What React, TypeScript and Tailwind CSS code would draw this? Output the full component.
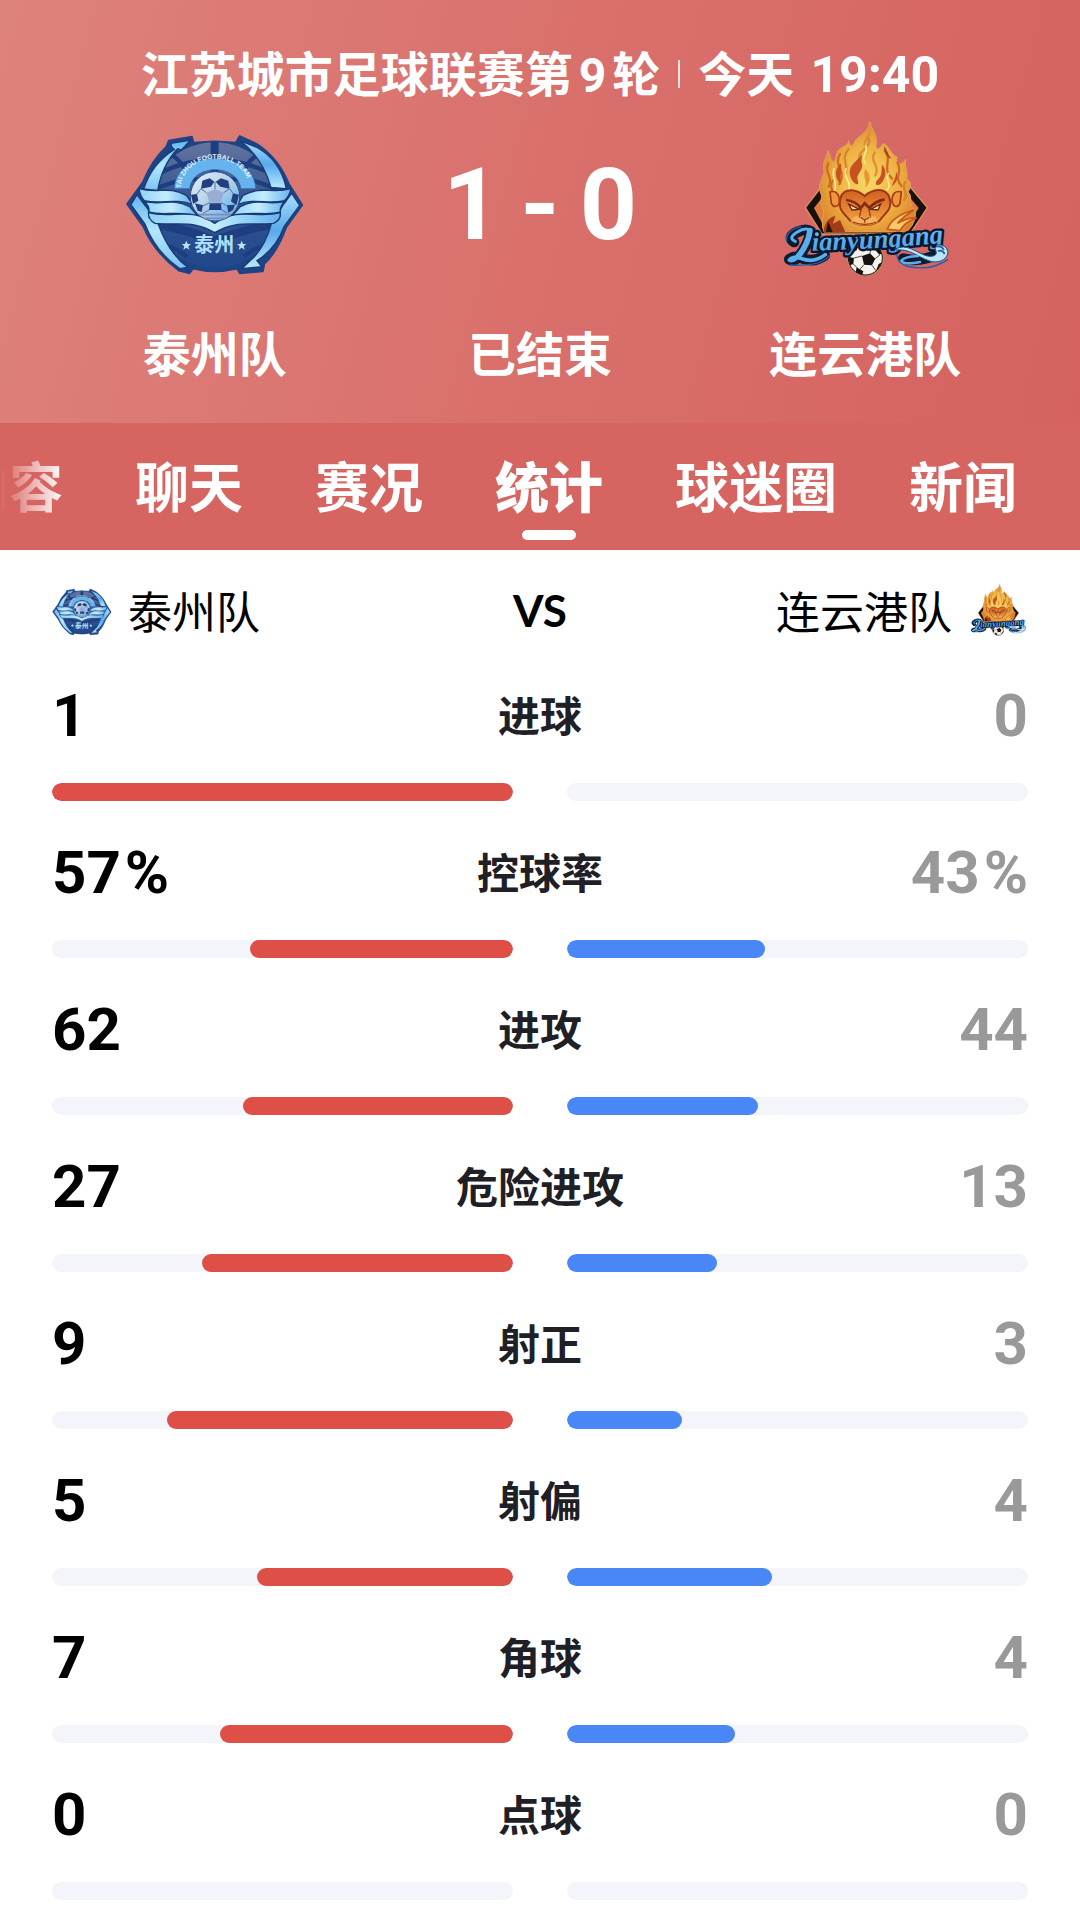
const CJK = "font-['Noto_Sans_CJK_SC',sans-serif]";
const NUM = "font-['Roboto','Noto_Sans_CJK_SC',sans-serif]";

type LogoProps = { id: string; className: string };

function TaizhouLogo({ id, className }: LogoProps) {
  const url = (name: string) => `url(#${id}-${name})`;
  return (
    <svg viewBox="74 15 540 540" className={className} role="img" aria-label="泰州队队徽">
      <defs>
        <linearGradient id={`${id}-disc`} x1="0" y1="0" x2="0" y2="1">
          <stop offset="0" stopColor="#64749f" />
          <stop offset="0.45" stopColor="#345591" />
          <stop offset="1" stopColor="#21488c" />
        </linearGradient>
        <linearGradient id={`${id}-left`} x1="0" y1="0" x2="0" y2="1">
          <stop offset="0" stopColor="#5fb4f0" />
          <stop offset="0.5" stopColor="#b5e6fb" />
          <stop offset="1" stopColor="#7cc4f4" />
        </linearGradient>
        <linearGradient id={`${id}-right`} x1="0" y1="0" x2="0" y2="1">
          <stop offset="0" stopColor="#a8defb" />
          <stop offset="0.5" stopColor="#5aa9ec" />
          <stop offset="1" stopColor="#b9ebfc" />
        </linearGradient>
        <linearGradient id={`${id}-wave`} x1="0" y1="0" x2="1" y2="0">
          <stop offset="0" stopColor="#8fd2f8" />
          <stop offset="0.5" stopColor="#c4edfc" />
          <stop offset="1" stopColor="#63b2ef" />
        </linearGradient>
        <linearGradient id={`${id}-ball`} x1="0" y1="0" x2="1" y2="1">
          <stop offset="0" stopColor="#e3f3fb" />
          <stop offset="0.5" stopColor="#b3cfe6" />
          <stop offset="0.75" stopColor="#7fbdf0" />
          <stop offset="1" stopColor="#8d97bd" />
        </linearGradient>
        <clipPath id={`${id}-clip`}>
          <ellipse cx="343" cy="285" rx="196" ry="190" />
        </clipPath>
        <path id={`${id}-arc`} d="M242 234 A102 88 0 0 1 446 234" />
      </defs>

      <path
        d="M275 80 L205 92 L198 110 Q155 150 128 215 L80 282 L130 352 Q160 425 235 482 L268 490 L278 476 Q343 492 410 476 L418 490 L488 484 L492 462 Q532 425 558 352 L606 285 L566 222 Q535 145 470 102 L418 78 L406 98 L343 94 L280 98 Z"
        fill="#1f4485"
        stroke="#1f4485"
        strokeWidth="5"
        strokeLinejoin="round"
      />
      <ellipse cx="343" cy="285" rx="194" ry="188" fill={url("disc")} />
      <g clipPath={url("clip")} fill="none" stroke="#1d3f80" strokeWidth="13">
        <path d="M150 205 Q240 150 342 150 Q445 150 538 205" />
        <path d="M150 245 Q250 190 345 215 Q440 190 538 245" />
        <path d="M150 340 Q240 352 343 392 Q450 352 540 340" strokeWidth="26" />
        <path d="M160 400 Q220 405 260 440 M530 400 Q470 405 430 440" />
        <path d="M343 90 V200" strokeWidth="24" />
        <path d="M195 125 Q235 140 255 180 M492 125 Q450 140 432 180" />
      </g>

      <path
        d="M222 236 C225 115 463 115 466 236 L422 236 C412 160 276 160 268 236 Z"
        fill="#67b3ee"
        stroke="#2a65ad"
        strokeWidth="2"
      />
      <text fontSize="20" fill="#e2f4fe" className="font-['Liberation_Sans',sans-serif]">
        <textPath href={`#${id}-arc`}>
          TAI ZHOU FOOTBALL TEAM
        </textPath>
      </text>

      <path
        d="M271 90 L212 100 Q212 112 222 118 Q155 160 130 237 L172 242 Q185 165 232 116 L243 120 Z"
        fill={url("left")}
        stroke="#183c78"
        strokeWidth="4"
      />
      <path
        d="M418 92 Q485 140 512 232 L558 236 Q540 150 470 112 Z"
        fill={url("right")}
        stroke="#183c78"
        strokeWidth="4"
      />
      <path
        d="M110 254 L92 284 L134 342 Q165 425 238 476 L262 472 Q205 430 172 338 L146 322 Q150 300 132 284 Z"
        fill={url("left")}
        stroke="#183c78"
        strokeWidth="4"
      />
      <path
        d="M574 250 L598 286 L552 348 Q528 415 470 452 L484 470 L424 476 L454 448 Q494 412 514 338 L540 318 Q535 300 552 280 Z"
        fill={url("right")}
        stroke="#183c78"
        strokeWidth="4"
      />

      <g fill={url("wave")} stroke="#173a72" strokeWidth="4" strokeLinejoin="round">
        <path d="M116 236 C175 252 205 226 258 256 L278 284 C220 262 185 285 132 272 Q120 260 116 236 Z" />
        <path d="M572 236 C510 252 485 226 428 256 L412 284 C465 262 500 285 552 272 Q568 258 572 236 Z" />
        <path d="M130 274 C185 288 215 262 268 290 L296 322 C232 298 195 320 146 306 Q148 286 130 274 Z" />
        <path d="M556 274 C500 288 470 262 420 290 L392 322 C455 298 490 320 540 306 Q538 286 556 274 Z" />
        <path d="M144 308 C220 328 265 288 343 340 C420 288 465 328 540 308 Q542 330 520 340 C455 348 410 328 343 368 C275 328 235 348 164 340 Q145 330 144 308 Z" />
      </g>

      <circle cx="344" cy="259" r="74" fill={url("ball")} stroke="#24528f" strokeWidth="3" />
      <g fill="#213f7c">
        <path d="M306 212 L328 205 L342 215 L332 230 L302 236 Z" />
        <path d="M384 212 L362 205 L346 215 L360 230 L388 236 Z" />
        <path d="M318 248 L344 238 L370 248 L362 278 L328 278 Z" fill="#98aed2" />
        <path d="M272 254 L290 252 L294 272 L278 282 Z" />
        <path d="M416 254 L398 250 L392 274 L408 286 Z" />
        <path d="M284 280 L308 286 L304 306 L292 302 Z" />
        <path d="M404 284 L380 286 L384 308 L398 300 Z" />
        <path d="M328 280 L362 280 L364 300 L326 300 Z" />
      </g>
      <g fill="none" stroke="#4672ab" strokeWidth="3">
        <path d="M318 248 L302 236 M370 248 L388 236 M328 278 L308 288 M362 278 L380 288 M344 238 V215 M308 310 L326 300 M364 300 L382 310 M290 252 L302 236 M388 236 L398 250" />
      </g>
      <path d="M296 314 H392 M312 325 H376" stroke="#7e8db8" strokeWidth="5" />

      <g fill="#b9e4fb">
        <path d="M258 392 L262 402 L272 402 L264 409 L267 419 L258 413 L249 419 L252 409 L244 402 L254 402 Z" />
        <path d="M424 392 L428 402 L438 402 L430 409 L433 419 L424 413 L415 419 L418 409 L410 402 L420 402 Z" />
      </g>
      <text x="342" y="426" textAnchor="middle" fontSize="60" fontWeight="700" fill="#aee0fb" className="font-['Noto_Sans_CJK_SC',sans-serif]">
        泰州
      </text>
    </svg>
  );
}

function LianyungangLogo({ id, className }: LogoProps) {
  const url = (name: string) => `url(#${id}-${name})`;
  return (
    <svg viewBox="45 15 540 540" className={className} role="img" aria-label="连云港队队徽">
      <defs>
        <radialGradient id={`${id}-fire`} cx="0.5" cy="0.55" r="0.6">
          <stop offset="0" stopColor="#f8d865" />
          <stop offset="0.55" stopColor="#eeb142" />
          <stop offset="1" stopColor="#d97f2a" />
        </radialGradient>
        <linearGradient id={`${id}-face`} x1="0" y1="0" x2="0" y2="1">
          <stop offset="0" stopColor="#d2601f" />
          <stop offset="1" stopColor="#f3a443" />
        </linearGradient>
        <linearGradient id={`${id}-word`} x1="0" y1="0" x2="0" y2="1">
          <stop offset="0" stopColor="#7cc5f3" />
          <stop offset="1" stopColor="#4a9ae0" />
        </linearGradient>
        <path id={`${id}-base`} d="M156 422 Q340 418 560 398" />
        <clipPath id={`${id}-ball`}>
          <circle cx="316" cy="444" r="50" />
        </clipPath>
      </defs>

      <path d="M136 293 L186 228 H448 L502 293 L450 372 H186 Z" fill="#17100f" stroke="#dc9355" strokeWidth="4" />
      <path d="M162 294 L192 256 V350 Z M476 294 L444 256 V345 Z" fill="#e17d3c" />

      <path
        d="M330 35 C335 62 352 72 349 98 C345 118 356 124 370 100 C392 112 388 130 412 142 C405 160 420 172 438 148 C432 176 446 184 440 208 C458 214 452 236 444 246 C462 262 440 280 464 300 C472 326 456 350 440 366 H192 C180 335 196 318 188 292 C176 275 190 262 182 250 C174 228 184 214 188 198 C196 190 188 172 192 158 C196 140 204 134 202 122 C214 132 208 148 220 156 C232 150 224 128 240 116 C252 108 262 106 266 92 C268 106 276 112 282 100 C288 78 322 76 330 35 Z"
        fill={url("fire")}
        stroke="#e2a05b"
        strokeWidth="3"
      />
      <g fill="none" stroke="#cf6c24" strokeWidth="7" strokeLinecap="round">
        <path d="M322 82 C345 112 286 122 300 148" opacity="0.6" />
        <path d="M240 132 C218 170 262 180 238 222" />
        <path d="M265 118 C240 148 268 160 256 190" opacity="0.65" />
        <path d="M374 122 C400 150 362 172 396 206" />
        <path d="M412 158 C430 186 400 200 424 228" />
        <path d="M205 160 C190 190 222 200 206 230" />
        <path d="M344 128 C326 154 362 166 346 196" opacity="0.6" />
        <path d="M218 212 C204 232 226 244 214 262" />
        <path d="M436 216 C420 236 450 252 432 270" opacity="0.6" />
      </g>
      <g fill="#c65220">
        <path d="M306 134 C282 160 262 170 272 202 C278 222 300 232 294 212 C284 192 316 180 304 156 Z" />
        <path d="M366 164 C382 180 378 204 362 222 C350 230 342 222 352 210 C368 196 364 182 366 164 Z" />
        <path d="M242 160 C222 180 224 206 244 224 C236 200 248 184 242 160 Z" />
        <path d="M408 184 C418 206 408 218 396 230 C398 214 410 204 408 184 Z" />
        <path d="M316 176 C336 198 332 216 316 234 C322 214 306 200 316 176 Z" fill="#e89634" />
        <path d="M330 56 C336 84 316 92 312 110 C306 92 326 80 330 56 Z" fill="#dd8b35" />
        <path d="M372 108 C384 122 382 134 396 146 C380 144 372 130 372 108 Z" fill="#a8481f" />
      </g>
      <g fill="none" stroke="#fbe991" strokeWidth="5" strokeLinecap="round">
        <path d="M318 108 C325 130 300 138 316 160" />
        <path d="M258 176 C246 202 278 218 266 238" />
        <path d="M386 190 C372 210 400 226 380 240" />
        <path d="M222 176 C212 200 236 220 222 246" />
      </g>

      <path
        d="M242 262 C252 232 290 236 314 258 C338 236 376 230 388 262 C398 292 382 306 366 322 C352 352 278 352 262 322 C244 304 234 292 242 262 Z"
        fill={url("face")}
        stroke="#9d3617"
        strokeWidth="6"
      />
      <path d="M210 246 C226 240 238 252 238 272 C238 290 222 296 214 280 Z M424 246 C406 240 396 252 396 272 C398 290 412 296 420 280 Z" fill="#ee9639" stroke="#a63d18" strokeWidth="5" />
      <path d="M258 270 C278 272 294 282 302 294 L314 280 L328 294 C338 282 352 272 374 268" fill="none" stroke="#852a12" strokeWidth="8" />
      <path d="M266 282 L298 298 L276 300 Z M362 282 L332 298 L354 300 Z" fill="#fbe79a" stroke="#6f2210" strokeWidth="4" />
      <path d="M272 338 Q276 312 306 318 L314 328 L326 318 Q350 312 354 338 Q314 354 272 338 Z" fill="#f6bd68" opacity="0.7" />
      <path d="M304 296 L298 322 M326 296 L332 322 M302 322 L314 330 L328 322 M314 330 V338 M278 336 Q314 350 350 336" fill="none" stroke="#9d3b16" strokeWidth="4" />
      <path d="M190 366 Q196 324 226 318 L218 342 L240 330 L256 366 Z" fill="#a23c16" />
      <path d="M198 366 L204 334 L218 366 Z" fill="#2b0f0c" />
      <path d="M382 358 Q396 318 462 300 Q430 320 412 340 Q446 322 470 324 Q430 338 420 362 Z" fill="#f9c867" stroke="#c8581d" strokeWidth="5" />

      <g fill="none" stroke="#0b1c33" strokeWidth="32" strokeLinecap="round" strokeLinejoin="round">
        <path d="M102 396 Q80 380 112 366 Q138 354 152 364 Q146 402 116 440 Q100 456 88 448 Q104 434 130 446 Q164 458 194 436" />
        <path d="M160 402 Q340 402 510 380 M430 446 Q480 460 548 426" />
      </g>
      <circle cx="316" cy="444" r="54" fill="#c99858" />
      <circle cx="316" cy="444" r="51" fill="#f5f3ef" stroke="#17120f" strokeWidth="3" />
      <g clipPath={url("ball")}>
        <path d="M306 438 L330 430 L346 446 L336 466 L312 464 Z M262 440 L282 444 L280 462 L264 468 Z M290 472 L310 484 L306 498 L286 492 Z M356 462 L372 454 V484 L348 482 Z M354 412 L368 430 L358 434 L344 418 Z M274 412 L296 408 L288 424 Z" fill="#17120f" />
        <path d="M306 438 L282 444 M330 430 L334 404 M346 446 L360 434 M336 466 L348 482 M312 464 L300 478 M280 462 L292 474" stroke="#4e4a46" strokeWidth="3" />
      </g>
      <path d="M80 396 Q74 362 124 350 M208 436 Q186 470 88 465 M412 418 Q404 454 438 468 Q510 486 564 448 M500 362 L538 376" fill="none" stroke="#245fa5" strokeWidth="4" />

      <text
        fontSize="80"
        fontStyle="italic"
        fontWeight="700"
        fill={url("word")}
        stroke="#08172b"
        strokeWidth="14"
        strokeLinejoin="round"
        paintOrder="stroke"
        className="font-['Liberation_Serif',serif]"
      >
        <textPath href={`#${id}-base`}>ianyungang</textPath>
      </text>
      <g fill="none" stroke="#5caee9" strokeLinecap="round" strokeLinejoin="round">
        <path d="M106 394 Q82 384 112 366 Q134 352 148 360" strokeWidth="9" />
        <path d="M150 362 Q144 404 114 440" strokeWidth="17" />
        <path d="M114 440 Q100 456 88 450 Q98 436 126 446 Q162 460 196 434" strokeWidth="11" />
      </g>
      <path
        d="M408 416 C440 402 462 422 486 432 C508 444 534 440 528 424 Q522 416 532 404 Q560 404 564 426 C562 452 530 462 506 452 C472 440 450 416 408 420 Z"
        fill="#b9e6f8"
        stroke="#1b4f8e"
        strokeWidth="3"
      />
      <path d="M474 438 Q432 440 424 452 Q434 466 480 456" fill="none" stroke="#5caee9" strokeWidth="8" strokeLinecap="round" />
      <path d="M530 410 Q544 406 552 420 M534 424 Q546 418 554 432" fill="none" stroke="#23609f" strokeWidth="5" />
    </svg>
  );
}

const tabs = ["内容", "聊天", "赛况", "统计", "球迷圈", "新闻"];

type Stat = { label: string; home: number; away: number; percent?: boolean };

const stats: Stat[] = [
  { label: "进球", home: 1, away: 0 },
  { label: "控球率", home: 57, away: 43, percent: true },
  { label: "进攻", home: 62, away: 44 },
  { label: "危险进攻", home: 27, away: 13 },
  { label: "射正", home: 9, away: 3 },
  { label: "射偏", home: 5, away: 4 },
  { label: "角球", home: 7, away: 4 },
  { label: "点球", home: 0, away: 0 },
];

function StatRow({ label, home, away, percent }: Stat) {
  const total = home + away || 1;
  const unit = percent ? <span className="ml-1">%</span> : null;
  return (
    <li>
      <div className="grid grid-cols-3 items-start leading-[60px] font-bold">
        <span className={`${NUM} text-[60px] text-black`}>{home}{unit}</span>
        <span className="text-center text-[42px] leading-[55px] text-[#1f2026]">{label}</span>
        <span className={`${NUM} text-right text-[60px] text-[#999999]`}>{away}{unit}</span>
      </div>
      <div className="mt-[37px] grid grid-cols-2 gap-[54px]">
        <div className="flex h-[18px] justify-end overflow-hidden rounded-full bg-[#f4f5fa]">
          <div className="rounded-full bg-[#de4f48]" style={{ width: `${(home / total) * 100}%` }} />
        </div>
        <div className="flex h-[18px] overflow-hidden rounded-full bg-[#f4f5fa]">
          <div className="rounded-full bg-[#4a87f6]" style={{ width: `${(away / total) * 100}%` }} />
        </div>
      </div>
    </li>
  );
}

export default function App() {
  return (
    <main className={`${CJK} w-full overflow-hidden bg-white`}>
      <header className="bg-linear-105 from-[#de827c] via-[#d9706c] to-[#d5625f] px-[52px] pt-[41px] pb-[42px] font-bold text-white">
        <h1 className="flex items-baseline justify-center text-[48px] leading-[60px] whitespace-nowrap">
          <span>江苏城市足球联赛第</span>
          <span className={`${NUM} mx-1.5`}>9</span>
          <span>轮</span>
          <span className="mx-[18px] h-7 w-0.5 self-center bg-white/80" />
          <span>今天</span>
          <span className={`${NUM} ml-4 text-[50px]`}>19:40</span>
        </h1>
        <div className="mt-[9px] grid grid-cols-3 items-center justify-items-center">
          <TaizhouLogo id="tz-lg" className="size-[180px]" />
          <div className={`${NUM} flex items-center gap-5 text-[100px] leading-[100px]`}>
            <span>1</span>
            <span>-</span>
            <span>0</span>
          </div>
          <LianyungangLogo id="lyg-lg" className="size-[180px]" />
        </div>
        <div className="mt-[26px] grid grid-cols-3 text-center text-[48px] leading-[60px]">
          <span>泰州队</span>
          <span>已结束</span>
          <span>连云港队</span>
        </div>
      </header>

      <nav className="relative flex justify-end gap-[72px] overflow-hidden bg-[#d66460] pt-8 pr-[63px] pb-2.5 text-white">
        {tabs.map((tab) => (
          <button
            key={tab}
            type="button"
            aria-current={tab === "统计" ? "page" : undefined}
            className={`flex shrink-0 flex-col items-center text-[54px] leading-[60px] ${tab === "统计" ? "font-black" : "font-bold"}`}
          >
            {tab}
            <span className={`mt-[15px] h-2.5 w-[54px] rounded-full ${tab === "统计" ? "bg-white" : "bg-transparent"}`} />
          </button>
        ))}
        <div className="pointer-events-none absolute inset-y-0 left-0 w-16 bg-linear-to-r from-[#d66460] to-transparent" />
      </nav>

      <section className="px-[52px] pt-8 pb-6">
        <div className="grid grid-cols-3 items-center text-[44px] leading-[56px] text-black">
          <div className="flex items-center gap-4">
            <TaizhouLogo id="tz-sm" className="size-[60px] shrink-0" />
            <span className="pb-1">泰州队</span>
          </div>
          <span className="pb-1 text-center font-['Lato',sans-serif] font-bold">VS</span>
          <div className="flex items-center justify-end gap-4">
            <span className="pb-1">连云港队</span>
            <LianyungangLogo id="lyg-sm" className="size-[60px] shrink-0" />
          </div>
        </div>
        <ul className="mt-11 flex flex-col gap-[42px]">
          {stats.map((stat) => (
            <StatRow key={stat.label} {...stat} />
          ))}
        </ul>
      </section>
    </main>
  );
}
